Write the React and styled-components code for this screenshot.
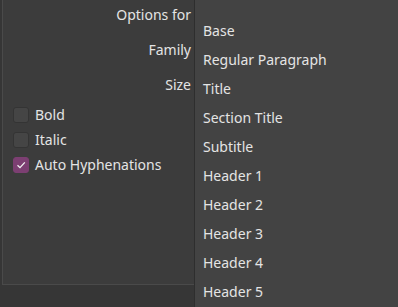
import React from 'react';
import styled, { createGlobalStyle } from 'styled-components';

const GlobalStyle = createGlobalStyle`
    html, body {
        margin: 0;
        padding: 0;
        background: #363636;
        overflow: hidden;
    }
    body {
        font-family: 'Noto Sans', 'Open Sans', sans-serif;
        font-size: 14px;
        color: #e4e4e4;
    }
`;

const Page = styled.div`
    position: relative;
    width: 398px;
    height: 307px;
    overflow: hidden;
`;

const Frame = styled.div`
    margin-left: 2px;
    width: 420px;
    height: 295px;
    margin-top: -10px;
    background: #3c3c3c;
    border-left: 1px solid #4a4a4a;
    border-bottom: 1px solid #4a4a4a;
    box-sizing: border-box;
    padding-top: 10px;
`;

const Labels = styled.div`
    width: 188px;
    display: flex;
    flex-direction: column;
    align-items: flex-end;
`;

const Label = styled.div`
    height: 35px;
    line-height: 30px;
`;

const Checks = styled.div`
    display: flex;
    flex-direction: column;
    padding-left: 10px;
    margin-top: -3px;
`;

const CheckRow = styled.label`
    display: flex;
    align-items: center;
    gap: 6px;
    height: 25px;
`;

const Box = styled.span`
    width: 16px;
    height: 16px;
    box-sizing: border-box;
    border-radius: 3px;
    display: flex;
    align-items: center;
    justify-content: center;
    background: ${p => (p.checked ? '#7c3f72' : '#454545')};
    border: 1px solid ${p => (p.checked ? '#7c3f72' : '#343434')};
`;

const Menu = styled.ul`
    position: absolute;
    left: 194px;
    top: 0;
    bottom: 0;
    right: 0;
    margin: 0;
    padding: 16px 0 0;
    list-style: none;
    background: #434343;
    border-left: 1px solid #2e2e2e;
`;

const Item = styled.li`
    height: 29px;
    line-height: 29px;
    padding-left: 8px;
    white-space: nowrap;
`;

const checks = [
    { label: 'Bold', checked: false },
    { label: 'Italic', checked: false },
    { label: 'Auto Hyphenations', checked: true },
];

const items = [
    'Base',
    'Regular Paragraph',
    'Title',
    'Section Title',
    'Subtitle',
    'Header 1',
    'Header 2',
    'Header 3',
    'Header 4',
    'Header 5',
];

export default function App() {
    return (
        <Page>
            <GlobalStyle />
            <Frame>
                <Labels>
                    <Label>Options for</Label>
                    <Label>Family</Label>
                    <Label>Size</Label>
                </Labels>
                <Checks>
                    {checks.map(c => (
                        <CheckRow key={c.label}>
                            <Box checked={c.checked}>
                                {c.checked && (
                                    <svg width="12" height="12" viewBox="0 0 12 12">
                                        <path d="M2.5 6.2 L5 8.6 L9.8 3.4" fill="none" stroke="#f2f2f2" strokeWidth="1.3" />
                                    </svg>
                                )}
                            </Box>
                            {c.label}
                        </CheckRow>
                    ))}
                </Checks>
            </Frame>
            <Menu>
                {items.map(i => (
                    <Item key={i}>{i}</Item>
                ))}
            </Menu>
        </Page>
    );
}
